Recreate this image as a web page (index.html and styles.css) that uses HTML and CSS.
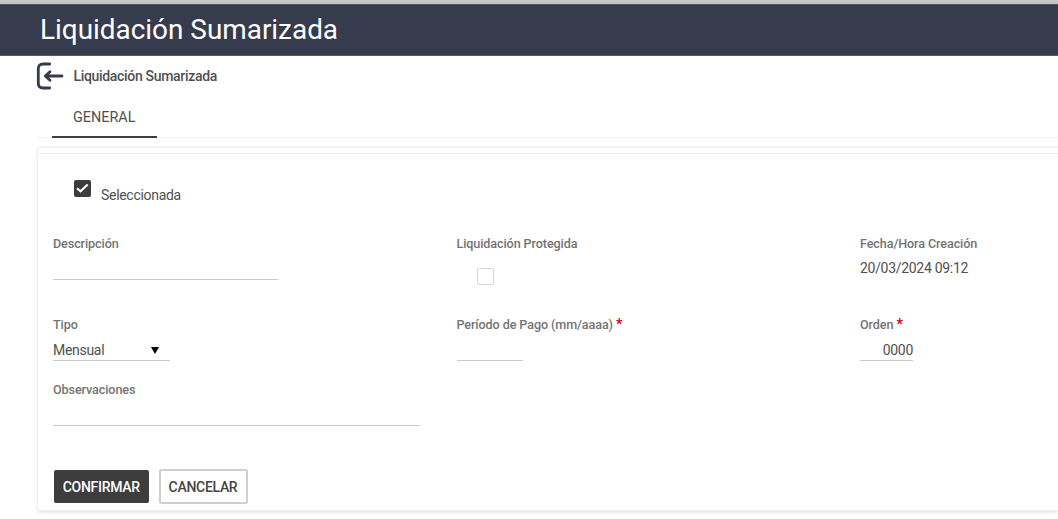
FILE: index.html
```html
<!DOCTYPE html>
<html lang="es">
<head>
<meta charset="utf-8">
<title>Liquidación Sumarizada</title>
<link rel="stylesheet" href="styles.css">
</head>
<body>
<header class="topbar"><h1>Liquidación Sumarizada</h1></header>
<nav class="crumb">
  <svg class="back" viewBox="0 0 28 28" width="28" height="28" fill="none" stroke="#353a4d" stroke-width="2.800" stroke-linecap="round" stroke-linejoin="round"><path d="M13.700 2H7Q2.300 2 2.300 6.700V21.300Q2.300 26 7 26H13.700M26 14H10M14 9.700L9.300 14L14 18.300"/></svg>
  <span class="crumbtext">Liquidación Sumarizada</span>
</nav>
<div class="tabs"><div class="tab">GENERAL</div></div>
<main class="card">
  <div class="inner">
    <div class="selected">
      <span class="check on"><svg viewBox="0 0 17 17" width="17" height="17" fill="none" stroke="#fff" stroke-width="2"><path d="M3 8.200L6.500 11.300L13.700 4.500"/></svg></span>
      <span class="seltext">Seleccionada</span>
    </div>
    <div class="grid">
      <div class="field"><label>Descripción</label><div class="line desc"></div></div>
      <div class="field"><label>Liquidación Protegida</label><span class="check off"></span></div>
      <div class="field"><label>Fecha/Hora Creación</label><div class="value">20/03/2024 09:12</div></div>
      <div class="field"><label>Tipo</label><div class="line tipo"><span>Mensual</span><i class="arrow"></i></div></div>
      <div class="field"><label>Período de Pago (mm/aaaa) <b class="req">*</b></label><div class="line periodo"></div></div>
      <div class="field"><label>Orden <b class="req">*</b></label><div class="line orden">0000</div></div>
      <div class="field"><label>Observaciones</label><div class="line obs"></div></div>
    </div>
    <div class="actions"><button class="btn primary">CONFIRMAR</button><button class="btn">CANCELAR</button></div>
  </div>
</main>
</body>
</html>
```
FILE: styles.css
```css
* { box-sizing: border-box; }
body { margin: 0; height: 519px; overflow: hidden; background: #fff; font: 14px/18px Roboto, sans-serif; letter-spacing: -.3px; color: #505050; }
.topbar { height: 56px; border-top: 4px solid #c4c4c2; background: #373b4e; box-shadow: inset 0 1px #4b4e5e, inset 0 -1px #565966; color: #fff; padding: 6px 0 0 40px; }
.topbar h1 { margin: 0; font-size: 27.900px; line-height: 40px; font-weight: 400; letter-spacing: 0; }
.crumb { height: 40px; display: flex; align-items: center; padding-left: 36px; gap: 9.5px; font-size: 14px; font-weight: 500; letter-spacing: -.32px; }
.tabs { height: 42px; margin-left: 37px; padding-left: 15px; border-bottom: 1px solid #f0f0f0; }
.tab { width: 105px; height: 42px; padding: 13px 0 0 21px; border-bottom: 2px solid #3f3f3f; font-size: 14.400px; letter-spacing: 0; }
.card { height: 365px; margin: 8px 0 0 37px; border: 1px solid #eee; border-top: 2px solid #f3f3f3; border-right: 0; border-radius: 3px 0 0 3px; box-shadow: 0 2px 3px #e9e9e9; }
.inner { margin-top: 5px; border-top: 1px solid #ececec; padding-left: 15px; }
.selected { height: 81px; display: flex; align-items: flex-start; padding: 26px 0 0 21px; gap: 10px; }
.seltext { margin-top: 6px; }
.check { display: block; width: 17px; height: 17px; border-radius: 2px; }
.on { background: #3d3d3d; }
.off { border: 1px solid #d8d8d8; margin: 15px 0 0 20px; }
.grid { display: grid; grid-template-columns: 403.5px 403.5px 190px; grid-template-rows: 81px 65px 89px; }
label { display: block; font-size: 12.600px; line-height: 18px; font-weight: 500; letter-spacing: -.1px; color: #747474; }
.req { color: #d0021b; font-size: 14px; font-weight: 700; line-height: 1; }
.line { height: 27px; border-bottom: 1px solid #c9c9c9; line-height: 32px; }
.desc { width: 225px; }
.tipo { width: 117px; display: flex; justify-content: space-between; padding-right: 10px; }
.arrow { border: 4.5px solid transparent; border-top: 7px solid #000; border-bottom: 0; align-self: flex-start; margin: 13px 1px 0 0; }
.periodo { width: 66px; }
.orden { width: 53px; text-align: right; }
.obs { width: 367px; }
.value { margin-top: 6px; }
.actions { display: flex; align-items: center; gap: 10px; padding-left: 1px; margin-top: -1px; }
.btn { width: 89px; height: 35px; padding: 0; font: 500 14px Roboto, sans-serif; letter-spacing: -.3px; background: #fff; color: #444; border: 2px solid #cfcfcf; border-radius: 2px; }
.primary { width: 94.5px; height: 33px; background: #3d3d3d; color: #fff; border-color: #3d3d3d; }
```
